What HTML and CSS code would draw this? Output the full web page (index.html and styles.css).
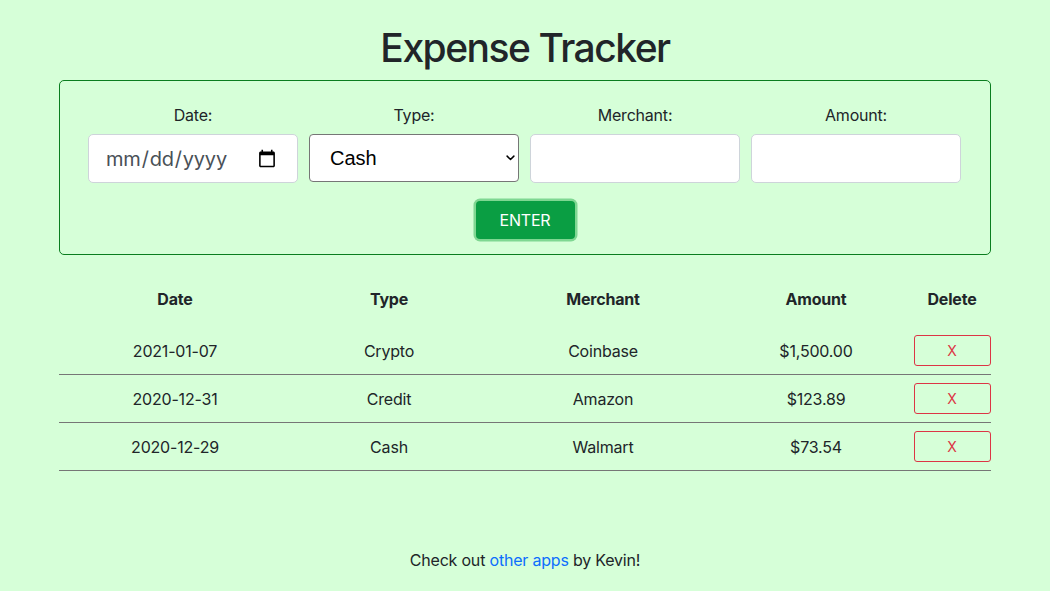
FILE: index.html
```html
<!DOCTYPE html>
<html lang="en">
<head>
<meta charset="utf-8">
<title>Expense Tracker</title>
<link rel="stylesheet" href="styles.css">
</head>
<body>
<main class="container">
  <h1 class="title">Expense Tracker</h1>
  <form class="entry-form">
    <div class="fields">
      <label class="field">
        <span class="field-label">Date:</span>
        <input class="control date-control" type="date">
      </label>
      <label class="field">
        <span class="field-label">Type:</span>
        <span class="select-wrap">
          <select class="control select-control">
            <option>Cash</option>
            <option>Credit</option>
            <option>Crypto</option>
          </select>
          <svg class="chevron" width="12" height="8" viewBox="0 0 12 8"><path d="M1.5 1.5 L6 6 L10.5 1.5" fill="none" stroke="#000" stroke-width="2" stroke-linecap="round" stroke-linejoin="round"/></svg>
        </span>
      </label>
      <label class="field">
        <span class="field-label">Merchant:</span>
        <input class="control" type="text">
      </label>
      <label class="field">
        <span class="field-label">Amount:</span>
        <input class="control" type="text">
      </label>
    </div>
    <div class="actions">
      <button type="button" class="enter-btn">ENTER</button>
    </div>
  </form>

  <table class="expenses">
    <colgroup>
      <col class="c-date"><col class="c-type"><col class="c-merchant"><col class="c-amount"><col class="c-delete">
    </colgroup>
    <thead>
      <tr><th>Date</th><th>Type</th><th>Merchant</th><th>Amount</th><th>Delete</th></tr>
    </thead>
    <tbody>
      <tr><td>2021-01-07</td><td>Crypto</td><td>Coinbase</td><td>$1,500.00</td><td class="del-cell"><button type="button" class="del-btn">X</button></td></tr>
      <tr><td>2020-12-31</td><td>Credit</td><td>Amazon</td><td>$123.89</td><td class="del-cell"><button type="button" class="del-btn">X</button></td></tr>
      <tr><td>2020-12-29</td><td>Cash</td><td>Walmart</td><td>$73.54</td><td class="del-cell"><button type="button" class="del-btn">X</button></td></tr>
    </tbody>
  </table>

  <p class="footer">Check out <a href="#" class="footer-link">other apps</a> by Kevin!</p>
</main>
</body>
</html>
```

FILE: styles.css
```css
* { box-sizing: border-box; }

html, body {
  margin: 0;
  padding: 0;
}

body {
  background: #d6ffd8;
  color: #212529;
  font-family: Inter, "Noto Sans", "Liberation Sans", sans-serif;
  font-size: 16px;
  line-height: 1.5;
  letter-spacing: -0.2px;
}

.container {
  width: 932px;
  margin: 0 auto;
}

.title {
  margin: 24px 0 8px;
  font-size: 39px;
  font-weight: 500;
  line-height: 48px;
  letter-spacing: -1.5px;
  text-align: center;
}

.entry-form {
  border: 1px solid #0a7d1f;
  border-radius: 5px;
  padding: 22px 0 15px 28px;
}

.fields {
  display: grid;
  grid-template-columns: repeat(4, 210px);
  column-gap: 11px;
  justify-content: start;
}

.field {
  display: flex;
  flex-direction: column;
  align-items: stretch;
}

.field-label {
  text-align: center;
  margin-bottom: 7px;
  line-height: 24px;
}

.control {
  height: 49px;
  width: 100%;
  background: #fff;
  border: 1px solid #ced4da;
  border-radius: 5px;
  padding: 0 16px;
  font-family: Inter, "Noto Sans", "Liberation Sans", sans-serif;
  font-size: 20px;
  letter-spacing: -0.2px;
  color: #495057;
  outline: none;
}

.date-control {
  padding-right: 18px;
}

.select-wrap {
  position: relative;
  display: block;
}

.select-control {
  -webkit-appearance: none;
  appearance: none;
  height: 48px;
  border: 1px solid #767676;
  border-radius: 4px;
  padding-left: 20px;
  color: #000;
  font-family: "Liberation Sans", Arial, sans-serif;
  letter-spacing: 0;
}

.chevron {
  position: absolute;
  right: 4px;
  top: 21px;
  width: 9px;
  height: 6px;
  pointer-events: none;
}

.actions {
  display: flex;
  justify-content: center;
  margin-top: 18px;
  margin-left: -28px;
}

.enter-btn {
  width: 99px;
  height: 38px;
  border: none;
  border-radius: 4px;
  background: #0a9e43;
  color: #fff;
  font-family: Inter, "Noto Sans", "Liberation Sans", sans-serif;
  font-size: 16px;
  letter-spacing: -0.2px;
  box-shadow: 0 0 0 2.5px #7fd792;
}

.expenses {
  width: 932px;
  margin-top: 24px;
  border-collapse: collapse;
  table-layout: fixed;
}

.c-date { width: 232px; }
.c-type { width: 196px; }
.c-merchant { width: 232px; }
.c-amount { width: 194px; }
.c-delete { width: 78px; }

.expenses th {
  font-weight: 700;
  text-align: center;
  padding: 8px 0 16px;
  line-height: 24px;
}

.expenses td {
  text-align: center;
  vertical-align: middle;
  padding: 8px 0;
  line-height: 24px;
  border-bottom: 1px solid #767676;
}

.del-cell {
  text-align: right;
}

.del-btn {
  width: 77px;
  height: 31px;
  background: transparent;
  border: 1px solid #dc3545;
  border-radius: 3px;
  color: #dc3545;
  font-family: Inter, "Noto Sans", "Liberation Sans", sans-serif;
  font-size: 14px;
  vertical-align: middle;
}

.footer {
  text-align: center;
  margin: 77px 0 0;
  line-height: 24px;
}

.footer-link {
  color: #0d6efd;
  text-decoration: none;
}
```
